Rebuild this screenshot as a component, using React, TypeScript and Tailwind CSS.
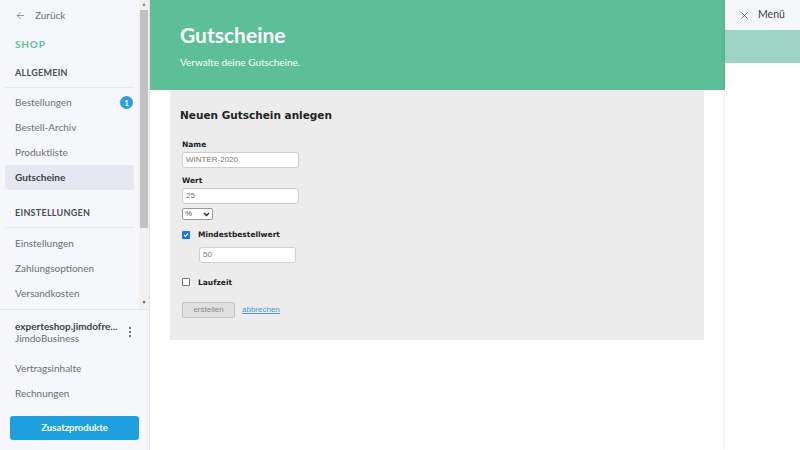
import { ArrowLeft, X } from "lucide-react";

const generalItems = ["Bestellungen", "Bestell-Archiv", "Produktliste", "Gutscheine"];
const settingsItems = ["Einstellungen", "Zahlungsoptionen", "Versandkosten"];

function NavItem({ label, active, badge }: { label: string; active?: boolean; badge?: number }) {
  return (
    <div
      className={`mx-[5px] flex h-[25px] items-center justify-between rounded-[3px] pl-[10px] pr-[1px] text-[10px] ${
        active ? "bg-[#e6e7f0] font-bold text-[#3b3f48]" : "text-[#6b6f78]"
      }`}
    >
      <span>{label}</span>
      {badge ? (
        <span className="flex h-[13px] w-[13px] items-center justify-center rounded-full bg-[#2a9fdc] text-[8px] font-bold text-white">
          {badge}
        </span>
      ) : null}
    </div>
  );
}

function Sidebar() {
  return (
    <aside className="flex h-[450px] w-[150px] shrink-0 flex-col border-r border-[#e3e5ea] bg-[#f6f7fa] font-['Lato',sans-serif]">
      <div className="flex h-[310px] shrink-0 border-b border-[#e3e5ea]">
        <div className="flex w-[140px] flex-col">
          <div className="flex h-[30px] items-center gap-[9px] pl-[15px] text-[10px] text-[#6b6f78]">
            <ArrowLeft size={11} strokeWidth={1.5} />
            <span>Zurück</span>
          </div>
          <div className="flex h-[28px] items-center pl-[15px] text-[10px] font-bold tracking-[0.08em] text-[#5cbf97]">
            SHOP
          </div>
          <div className="mx-[5px] flex h-[30px] items-center border-b border-[#e6e8ec] pl-[10px] text-[9px] font-bold tracking-[0.03em] text-[#4a4e57]">
            ALLGEMEIN
          </div>
          <div className="flex flex-col pt-[2px]">
            {generalItems.map((l) => (
              <NavItem key={l} label={l} active={l === "Gutscheine"} badge={l === "Bestellungen" ? 1 : undefined} />
            ))}
          </div>
          <div className="mx-[5px] mt-[8px] flex h-[30px] items-center border-b border-[#e6e8ec] pl-[10px] text-[9px] font-bold tracking-[0.03em] text-[#4a4e57]">
            EINSTELLUNGEN
          </div>
          <div className="flex flex-col pt-[3px]">
            {settingsItems.map((l) => (
              <NavItem key={l} label={l} />
            ))}
          </div>
        </div>
        <div className="flex w-[10px] flex-col items-center bg-[#f1f1f1]">
          <div className="flex h-[10px] items-center justify-center text-[5px] text-[#7a7a7a]">▲</div>
          <div className="h-[218px] w-[8px] bg-[#c1c1c1]"></div>
          <div className="flex-1"></div>
          <div className="flex h-[12px] items-center justify-center text-[5px] text-[#505050]">▼</div>
        </div>
      </div>
      <div className="flex items-center justify-between pl-[15px] pr-[18px] pt-[10px]">
        <div className="flex flex-col leading-[12px]">
          <span className="text-[10px] font-bold text-[#3b3f48]">experteshop.jimdofre...</span>
          <span className="text-[10px] text-[#6b6f78]">JimdoBusiness</span>
        </div>
        <div className="flex flex-col gap-[2px]">
          <span className="h-[2px] w-[2px] rounded-full bg-[#4a4e57]"></span>
          <span className="h-[2px] w-[2px] rounded-full bg-[#4a4e57]"></span>
          <span className="h-[2px] w-[2px] rounded-full bg-[#4a4e57]"></span>
        </div>
      </div>
      <div className="mt-[12px] flex flex-col">
        <div className="flex h-[25px] items-center pl-[15px] text-[10px] text-[#6b6f78]">Vertragsinhalte</div>
        <div className="flex h-[25px] items-center pl-[15px] text-[10px] text-[#6b6f78]">Rechnungen</div>
      </div>
      <div className="mt-[10px] px-[10px]">
        <button className="flex h-[24px] w-full items-center justify-center rounded-[3px] bg-[#1ea0df] text-[9.5px] font-bold text-white">
          Zusatzprodukte
        </button>
      </div>
    </aside>
  );
}

function Field({ value, width }: { value: string; width: string }) {
  return (
    <div
      className={`${width} flex h-[16px] items-center rounded-[3px] border border-[#cfcfcf] bg-white px-[3px] font-['Liberation_Sans',sans-serif] text-[8px] text-[#777]`}
    >
      {value}
    </div>
  );
}

function Form() {
  return (
    <div className="mx-[20px] w-[534px] bg-[#ececec] pb-[22px] pl-[10px] pt-[18px] font-['DejaVu_Sans',sans-serif] text-[#222]">
      <h2 className="text-[10.5px] font-bold leading-[14px] text-[#222]">Neuen Gutschein anlegen</h2>
      <div className="mt-[18px] flex flex-col pl-[2px]">
        <label className="text-[7.5px] font-bold leading-[10px]">Name</label>
        <div className="mt-[2px]">
          <Field value="WINTER-2020" width="w-[117px]" />
        </div>
        <label className="mt-[8px] text-[7.5px] font-bold leading-[10px]">Wert</label>
        <div className="mt-[2px]">
          <Field value="25" width="w-[117px]" />
        </div>
        <div className="mt-[4px] flex h-[12px] w-[31px] items-center justify-between rounded-[2px] border border-[#9a9a9a] bg-white px-[2px] font-['Liberation_Sans',sans-serif] text-[8px] text-[#555]">
          <span>%</span>
          <svg width="7" height="5" viewBox="0 0 7 5">
            <path d="M1 1l2.5 2.5L6 1" stroke="#222" strokeWidth="1.3" fill="none" />
          </svg>
        </div>
        <div className="mt-[9px] flex items-center gap-[8px]">
          <span className="flex h-[8px] w-[8px] items-center justify-center rounded-[1px] bg-[#1a73e8]">
            <svg width="6" height="6" viewBox="0 0 6 6">
              <path d="M1 3l1.4 1.4L5 1.5" stroke="white" strokeWidth="1.2" fill="none" />
            </svg>
          </span>
          <span className="mt-[1px] text-[7.5px] font-bold leading-[10px]">Mindestbestellwert</span>
        </div>
        <div className="ml-[17px] mt-[7px]">
          <Field value="50" width="w-[97px]" />
        </div>
        <div className="mt-[12px] flex items-center gap-[8px]">
          <span className="h-[8px] w-[8px] rounded-[1px] border border-[#767676] bg-white"></span>
          <span className="mt-[3px] text-[7.5px] font-bold leading-[10px]">Laufzeit</span>
        </div>
        <div className="mt-[14px] flex items-center gap-[7px]">
          <button className="flex h-[16px] w-[53px] items-center justify-center rounded-[2px] border border-[#c4c4c4] bg-[#e0e0e0] font-['Liberation_Sans',sans-serif] text-[8px] text-[#888]">
            erstellen
          </button>
          <span className="font-['Liberation_Sans',sans-serif] text-[8px] text-[#4b9ad8] underline">abbrechen</span>
        </div>
      </div>
    </div>
  );
}

function RightPanel() {
  return (
    <div className="flex h-[450px] w-[75px] shrink-0 flex-col bg-white shadow-[-1px_0_3px_rgba(0,0,0,0.08)] font-['Lato',sans-serif]">
      <div className="flex h-[30px] items-center gap-[8px] bg-[#f5f6f9] pl-[14px] text-[10.5px] text-[#3b3f48]">
        <X size={11} strokeWidth={1.6} />
        <span>Menü</span>
      </div>
      <div className="h-[33px] bg-[#9ed4c4]"></div>
    </div>
  );
}

export default function App() {
  return (
    <div className="flex h-[450px] w-[800px] overflow-hidden bg-white">
      <Sidebar />
      <main className="flex w-[575px] shrink-0 flex-col">
        <div className="flex h-[90px] flex-col bg-[#5cbf97] pl-[30px] pt-[22px] font-['Lato',sans-serif] text-white">
          <h1 className="text-[21px] font-bold leading-[26px]">Gutscheine</h1>
          <p className="mt-[8px] text-[10px] leading-[13px]">Verwalte deine Gutscheine.</p>
        </div>
        <Form />
      </main>
      <RightPanel />
    </div>
  );
}
